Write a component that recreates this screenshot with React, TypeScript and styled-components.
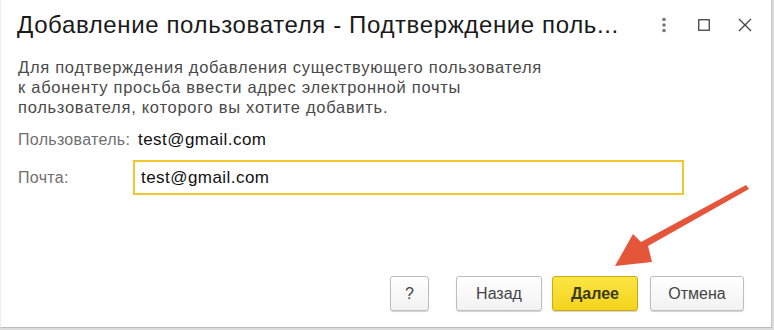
import React from "react";
import styled, { createGlobalStyle } from "styled-components";

const Global = createGlobalStyle`
  html, body { margin: 0; padding: 0; background: #dcdcdc; }
  body { font-family: Arial, "Liberation Sans", sans-serif; }
  * { box-sizing: border-box; }
`;

const Window = styled.div`
  position: relative;
  width: 772px;
  height: 328px;
  background: #ffffff;
  border-left: 1px solid #ececec;
  border-right: 1px solid #c4c4c4;
  border-bottom: 1px solid #bdbdbd;
  display: flex;
  flex-direction: column;
`;

const TitleBar = styled.div`
  height: 50px;
  display: flex;
  align-items: center;
  padding-left: 16px;
`;

const Title = styled.div`
  flex: 1;
  font-size: 24px;
  letter-spacing: 0.62px;
  color: #1a1a1a;
  white-space: nowrap;
`;

const TitleIcons = styled.div`
  display: flex;
  align-items: center;
  margin-right: 12px;
`;

const IconBtn = styled.div<{ $w: number }>`
  width: ${(p) => p.$w}px;
  display: flex;
  justify-content: center;
  align-items: center;
  color: #555;
`;

const Body = styled.div`
  flex: 1;
  display: flex;
  flex-direction: column;
  padding: 7px 16px 0 17px;
`;

const Description = styled.div`
  font-size: 16.5px;
  letter-spacing: 0.72px;
  line-height: 20px;
  color: #4a4a4a;
`;

const FieldRow = styled.div<{ $mt: number }>`
  display: flex;
  align-items: center;
  margin-top: ${(p) => p.$mt}px;
`;

const Label = styled.div`
  width: 115px;
  font-size: 16px;
  letter-spacing: 0.3px;
  color: #6f6f6f;
  white-space: nowrap;
`;

const Value = styled.div`
  font-size: 17px;
  letter-spacing: 0.45px;
  color: #111;
  margin-left: 5px;
`;

const Input = styled.div`
  width: 551px;
  height: 35px;
  border: 2px solid #f2c630;
  display: flex;
  align-items: center;
  padding-left: 6px;
  font-size: 17px;
  letter-spacing: 0.45px;
  color: #111;
`;

const Footer = styled.div`
  display: flex;
  justify-content: flex-end;
  align-items: center;
  padding: 0 27px 16px 0;
  margin-top: auto;
`;

const Button = styled.div<{ $w: number; $primary?: boolean; $ml: number }>`
  width: ${(p) => p.$w}px;
  height: 35px;
  margin-left: ${(p) => p.$ml}px;
  border-radius: 3px;
  display: flex;
  align-items: center;
  justify-content: center;
  font-size: 16px;
  color: ${(p) => (p.$primary ? "#3a3a1a" : "#444")};
  font-weight: ${(p) => (p.$primary ? 700 : 400)};
  border: 1px solid ${(p) => (p.$primary ? "#c9a914" : "#bdbdbd")};
  background: ${(p) =>
    p.$primary
      ? "linear-gradient(#fbe544, #f4d41c)"
      : "linear-gradient(#ffffff, #f2f2f2)"};
  box-shadow: 0 1px 1px rgba(0, 0, 0, 0.18);
`;

const ArrowLayer = styled.svg`
  position: absolute;
  left: 0;
  top: 0;
  pointer-events: none;
`;

export default function App() {
  return (
    <>
      <Global />
      <Window>
        <TitleBar>
          <Title>Добавление пользователя - Подтверждение поль...</Title>
          <TitleIcons>
            <IconBtn $w={27}>
              <svg width="6" height="16" viewBox="0 0 6 16">
                <circle cx="3" cy="2.5" r="1.8" fill="#777" />
                <circle cx="3" cy="8" r="1.8" fill="#777" />
                <circle cx="3" cy="13.5" r="1.8" fill="#777" />
              </svg>
            </IconBtn>
            <IconBtn $w={54}>
              <svg width="12" height="12" viewBox="0 0 12 12">
                <rect x="0.75" y="0.75" width="10.5" height="10.5" fill="none" stroke="#444" strokeWidth="1.3" />
              </svg>
            </IconBtn>
            <IconBtn $w={28}>
              <svg width="14" height="14" viewBox="0 0 14 14">
                <path d="M1 1 L13 13 M13 1 L1 13" stroke="#444" strokeWidth="1.3" />
              </svg>
            </IconBtn>
          </TitleIcons>
        </TitleBar>
        <Body>
          <Description>
            Для подтверждения добавления существующего пользователя
            <br />к абоненту просьба ввести адрес электронной почты
            <br />
            пользователя, которого вы хотите добавить.
          </Description>
          <FieldRow $mt={13}>
            <Label>Пользователь:</Label>
            <Value>test@gmail.com</Value>
          </FieldRow>
          <FieldRow $mt={10}>
            <Label>Почта:</Label>
            <Input>test@gmail.com</Input>
          </FieldRow>
        </Body>
        <Footer>
          <Button $w={39} $ml={0}>?</Button>
          <Button $w={86} $ml={27}>Назад</Button>
          <Button $w={86} $ml={10} $primary>Далее</Button>
          <Button $w={94} $ml={12}>Отмена</Button>
        </Footer>
        <ArrowLayer width="772" height="328" viewBox="0 0 772 328">
          <path
            d="M745 185 L748 189 L647 246 L651 262 L614 266 L632 234 L640 242 Z"
            fill="#e5553a"
          />
        </ArrowLayer>
      </Window>
    </>
  );
}
